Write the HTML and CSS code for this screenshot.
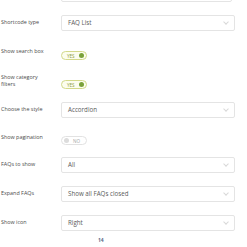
FILE: index.html
```html
<!DOCTYPE html>
<html lang="en">

<head>
    <meta charset="UTF-8">
    <meta name="viewport" content="width=device-width, initial-scale=1.0">
    <title>FAQ Shortcode Settings</title>
    <link rel="stylesheet" href="styles.css">
</head>

<body>
    <div class="settings">
        <!-- cut-off field from above -->
        <div class="row">
            <div class="label"></div>
            <div class="field"><div class="input short"></div></div>
        </div>

        <div class="row">
            <div class="label">Shortcode type</div>
            <div class="field"><div class="select"><span>FAQ List</span><i class="chev"></i></div></div>
        </div>

        <div class="row">
            <div class="label">Show search box</div>
            <div class="field"><span class="toggle on"><b>YES</b><i class="dot"></i></span></div>
        </div>

        <div class="row">
            <div class="label">Show category filters</div>
            <div class="field"><span class="toggle on"><b>YES</b><i class="dot"></i></span></div>
        </div>

        <div class="row">
            <div class="label">Choose the style</div>
            <div class="field"><div class="select"><span>Accordion</span><i class="chev"></i></div></div>
        </div>

        <div class="row tight">
            <div class="label">Show pagination</div>
            <div class="field"><span class="toggle off"><i class="dot"></i><b>NO</b></span></div>
        </div>

        <div class="row">
            <div class="label">FAQs to show</div>
            <div class="field"><div class="select"><span>All</span><i class="chev"></i></div></div>
        </div>

        <div class="row">
            <div class="label">Expand FAQs</div>
            <div class="field"><div class="select"><span>Show all FAQs closed</span><i class="chev"></i></div></div>
        </div>

        <div class="row">
            <div class="label">Show icon</div>
            <div class="field"><div class="select"><span>Right</span><i class="chev"></i></div></div>
        </div>

        <div class="more">14</div>
    </div>
</body>

</html>
```

FILE: styles.css
```css
body {
    margin: 0;
    background: #fff;
    font-family: "Open Sans", Arial, sans-serif;
    color: #444;
}

.settings {
    margin-top: -21px;
    padding-left: 1px;
}

.row {
    display: grid;
    grid-template-columns: 60px 174px;
    align-items: center;
    height: 29px;
}

.row.tight {
    height: 26px;
}

.label {
    font-size: 5.4px;
    line-height: 7px;
    color: #4a4a4a;
    padding-right: 16px;
}

.input,
.select {
    box-sizing: border-box;
    height: 16px;
    border: 1px solid #e4e4e4;
    border-radius: 2px;
    background: #fff;
}

.input.short {
    width: 171px;
}

.select {
    display: flex;
    align-items: center;
    justify-content: space-between;
    padding: 0 6px 0 6px;
    font-size: 6.2px;
    color: #5a5a5a;
}

.chev {
    width: 3px;
    height: 3px;
    border-right: 1px solid #d8d8d8;
    border-bottom: 1px solid #d8d8d8;
    transform: rotate(45deg);
    margin-top: -2px;
}

.toggle {
    box-sizing: border-box;
    display: inline-flex;
    align-items: center;
    gap: 4px;
    width: 26px;
    height: 9px;
    padding: 0 2px 0 5px;
    border: 1px solid #d3d98a;
    border-radius: 5px;
    background: #fcfdee;
    font-size: 4.6px;
}

.toggle b {
    font-weight: 400;
    color: #8c9a3c;
}

.toggle .dot {
    width: 5px;
    height: 5px;
    border-radius: 50%;
    background: #7ba23a;
    margin-left: auto;
}

.toggle.off {
    border-color: #e2e2e2;
    background: #fff;
    padding: 0 5px 0 2px;
}

.toggle.off .dot {
    background: #dcdcdc;
    margin-left: 0;
}

.toggle.off b {
    color: #a6a6a6;
}

.more {
    padding-left: 97px;
    font-size: 5px;
    font-weight: 700;
    color: #5a6a88;
}
```
